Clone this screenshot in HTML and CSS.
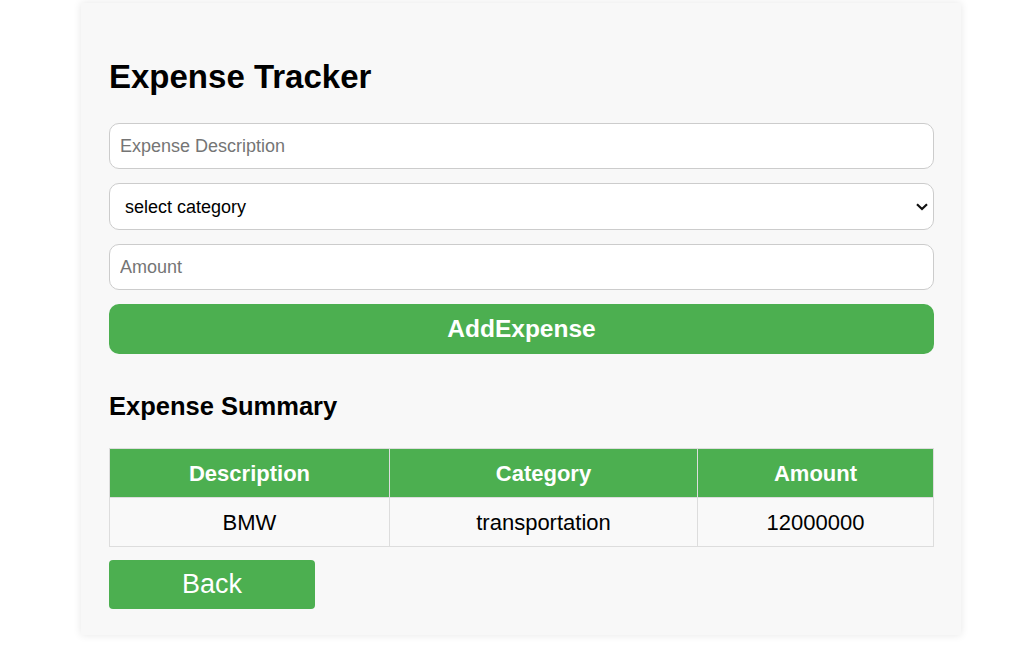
FILE: index.html
```html
<!DOCTYPE html>
<html>
<head>
<meta charset="utf-8">
<title>Expense Tracker</title>
<link rel="stylesheet" href="styles.css">
</head>
<body>
<div class="page">
  <div class="card">
    <h1 class="title">Expense Tracker</h1>
    <form class="form">
      <input class="field" type="text" placeholder="Expense Description">
      <select class="field select">
        <option>select category</option>
        <option>food</option>
        <option>transportation</option>
        <option>entertainment</option>
      </select>
      <input class="field" type="text" placeholder="Amount">
      <button class="add-btn" type="button">AddExpense</button>
    </form>
    <h2 class="subtitle">Expense Summary</h2>
    <table class="table">
      <colgroup>
        <col class="col-desc">
        <col class="col-cat">
        <col class="col-amt">
      </colgroup>
      <thead>
        <tr><th>Description</th><th>Category</th><th>Amount</th></tr>
      </thead>
      <tbody>
        <tr><td>BMW</td><td>transportation</td><td>12000000</td></tr>
      </tbody>
    </table>
    <button class="back-btn" type="button">Back</button>
  </div>
</div>
</body>
</html>
```

FILE: styles.css
```css
html, body {
  margin: 0;
  padding: 0;
  background: #ffffff;
  font-family: "Liberation Sans", Arial, sans-serif;
}

.page {
  padding: 3px 0 20px 81px;
}

.card {
  box-sizing: border-box;
  width: 880px;
  padding: 28px 27px 26px 28px;
  background: #f8f8f8;
  box-shadow: 0 0 8px rgba(0, 0, 0, 0.1);
  display: flex;
  flex-direction: column;
}

.title {
  margin: 27px 0 28px 0;
  font-size: 33px;
  font-weight: bold;
  line-height: 37px;
  color: #000;
}

.form {
  display: flex;
  flex-direction: column;
  gap: 14px;
}

.field {
  box-sizing: border-box;
  width: 100%;
  height: 46px;
  padding: 0 10px;
  border: 1px solid #cccccc;
  border-radius: 10px;
  background: #ffffff;
  font-family: "Liberation Sans", Arial, sans-serif;
  font-size: 18px;
  color: #000;
  outline: none;
}

.field::placeholder {
  color: #757575;
}

.select {
  height: 47px;
  padding-left: 15px;
  -webkit-appearance: none;
  appearance: none;
  background-image: url("data:image/svg+xml;utf8,<svg xmlns='http://www.w3.org/2000/svg' width='12' height='8' viewBox='0 0 12 8'><path d='M1 1.2 L6 6 L11 1.2' fill='none' stroke='%23111' stroke-width='2.2'/></svg>");
  background-repeat: no-repeat;
  background-position: right 5px center;
  background-size: 12px 8px;
}

.add-btn {
  height: 50px;
  border: none;
  border-radius: 10px;
  background: #4caf50;
  color: #ffffff;
  font-family: "Liberation Sans", Arial, sans-serif;
  font-size: 24.5px;
  font-weight: bold;
}

.subtitle {
  margin: 38px 0 27px 0;
  font-size: 25.5px;
  line-height: 29px;
  font-weight: bold;
  color: #000;
}

.table {
  width: 824px;
  border-collapse: collapse;
  table-layout: fixed;
  font-size: 22px;
}

.col-desc { width: 280px; }
.col-cat { width: 308px; }
.col-amt { width: 236px; }

.table th,
.table td {
  border: 1px solid #dddddd;
  text-align: center;
  padding: 0;
  line-height: 25px;
}

.table th {
  height: 48px;
  background: #4caf50;
  color: #ffffff;
  font-weight: bold;
}

.table td {
  height: 48px;
  background: #f9f9f9;
  color: #000;
}

.back-btn {
  margin-top: 13px;
  width: 206px;
  height: 49px;
  border: none;
  border-radius: 4px;
  background: #4caf50;
  color: #ffffff;
  font-family: "Liberation Sans", Arial, sans-serif;
  font-size: 27px;
  padding: 0;
}
```
